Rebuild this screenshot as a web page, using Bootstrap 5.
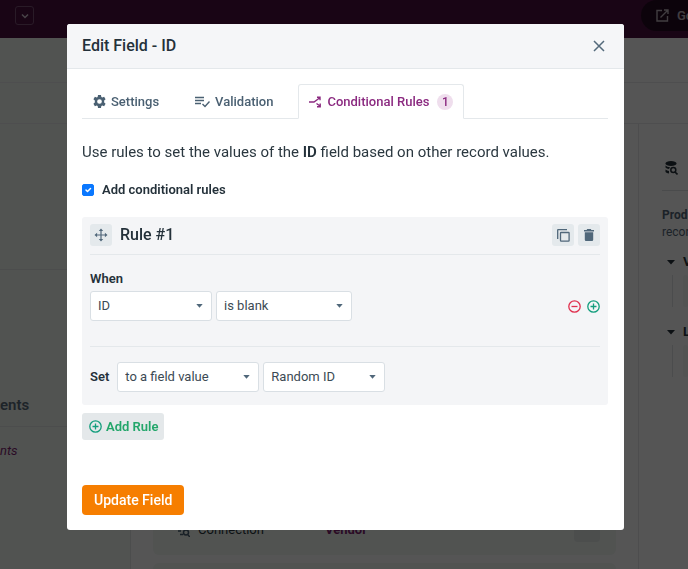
<!DOCTYPE html>
<html lang="en">
<head>
<meta charset="utf-8">
<meta name="viewport" content="width=device-width, initial-scale=1">
<title>Edit Field - ID</title>
<link href="https://cdn.jsdelivr.net/npm/bootstrap@5.3.0/dist/css/bootstrap.min.css" rel="stylesheet">
<style>
  body { font-family: Roboto, "Noto Sans", sans-serif; font-size: 13px; line-height: 20px; color: #2b3840; overflow: hidden; }
  svg { display: block; flex: none; }
  /* page behind the dialog */
  .backdrop-page { height: 100vh; overflow: hidden; }
  .top-bar { flex: none; height: 38px; background: #4b0f40; }
  .app-menu { width: 19px; height: 19px; margin: 6px 0 0 15px; padding: 0; border: 1px solid #7c5376; border-radius: 3px; background: none; color: #d9c9d6; }
  .live-link { width: 47px; height: 31px; padding-left: 15px; border-radius: 16px 0 0 16px; background: #260a22; color: #c4b8c2; font-size: 13px; font-weight: 600; white-space: nowrap; overflow: hidden; }
  .tool-row { flex: none; height: 45px; border-bottom: 1px solid #e9ebed; background: #fff; }
  .tool-row.second { height: 41px; }
  .side-tint { width: 130px; background: #f2f8f4; }
  .side-left { width: 131px; background: #f2f8f4; border-right: 1px solid #e3e6e8; }
  .side-blank { height: 146px; border-bottom: 1px solid #e3e6e8; }
  .side-head { height: 157px; padding-bottom: 11px; border-bottom: 1px solid #e3e6e8; font-size: 15px; font-weight: 600; color: #5b6c7b; }
  .side-item { padding-top: 14px; font-style: italic; color: #7f1f70; text-decoration: none; }
  .canvas-col { padding: 0 22px; }
  .field-card { height: 62px; padding: 12px 16px 0 24px; border-radius: 6px; background: #f2f8f4; }
  .canvas-blank { height: 369px; }
  .field-name { width: 119px; }
  .field-link { color: #7f1f70; }
  .field-action { width: 26px; height: 24px; border-radius: 4px; background: #e4eae6; }
  .side-right { width: 50px; border-left: 1px solid #e6e8ea; padding-left: 23px; white-space: nowrap; overflow: hidden; }
  .side-right .icon-row { height: 67px; padding: 37px 0 0 3px; border-bottom: 1px solid #dfe2e5; }
  .side-note { margin: 16px 0 11px; line-height: 17px; font-size: 12px; color: #56687a; }
  .side-group { height: 70px; margin-left: 5px; }
  .side-group > div:first-child { gap: 8px; height: 20px; }
  .side-slot { height: 32px; margin: 3px 0 0 5px; border-left: 1px solid #e1e4e6; padding-left: 10px; }
  .side-slot div { height: 32px; background: #f6f8f7; border-radius: 4px; }
  .modal-backdrop { --bs-backdrop-opacity: .667; }
  /* dialog */
  .modal-dialog { max-width: none; margin: 24px 64px 24px 67px; }
  .modal-content { border: 0; border-radius: 3px; }
  .modal-header { height: 45px; padding: 0 16px 0 15px; background: #f5f6f8; border-bottom: 1px solid #e4e8eb; border-radius: 3px 3px 0 0; }
  .modal-title { font-size: 16px; line-height: 20px; font-weight: 500; color: #24313a; }
  .close-btn { width: 18px; height: 18px; padding: 0; border: 0; background: none; color: #546a7b; }
  .modal-body { padding: 15px 16px 15px 15px; }
  .nav-tabs { --bs-nav-tabs-border-color: #e4e8eb; }
  .nav-tabs .nav-link { display: flex; align-items: center; height: 35px; padding: 0 10px; gap: 5px; color: #4a6072; font-size: 13px; font-weight: 500; border-radius: 3px 3px 0 0; }
  .nav-tabs .nav-link.active { color: #8b2a80; border-color: #e4e8eb #e4e8eb #fff; }
  .nav-tabs li + li { margin-left: 14px; }
  .count-pill { width: 16px; height: 16px; margin-left: 3px; border-radius: 8px; background: #efdeed; line-height: 16px; font-size: 12px; text-align: center; }
  .intro { margin: 22px 0 17px; font-size: 15px; line-height: 22px; }
  .intro b { font-weight: 600; color: #24313a; }
  .strong-label { font-weight: 600; color: #24313a; }
  .form-check-input { width: 12px; height: 12px; margin: 0; }
  .form-check-input[type=checkbox] { border-radius: 2px; }
  .form-check-input:checked { background-color: #0a78ff; border-color: #0a78ff; }
  .rule-box { margin-top: 17px; padding: 7px 8px 13px; border-radius: 3px; background: #f4f5f7; }
  .rule-head { padding-bottom: 8px; border-bottom: 1px solid #e4e8eb; }
  .rule-title { font-size: 16px; line-height: 20px; font-weight: 500; color: #24313a; }
  .tool-btn { display: flex; align-items: center; justify-content: center; width: 22px; height: 22px; padding: 0; border: 0; border-radius: 3px; background: #e4e9ec; color: #50677a; }
  .when-block { padding: 14px 0 25px; border-bottom: 1px solid #e4e8eb; }
  .when-row { padding-top: 2px; }
  .set-row { padding-top: 15px; }
  .form-select { height: 30px; padding: 0 24px 0 7px; border: 1px solid #d9dfe4; border-radius: 3px; font-size: 13px; line-height: 20px; color: #3c4a54; background-color: #fff; background-size: 7px 4px; background-position: right 8px center;
    background-image: url("data:image/svg+xml,%3csvg xmlns='http://www.w3.org/2000/svg' viewBox='0 0 7 4'%3e%3cpath fill='%2350677a' d='M.3 0h6.4L3.5 3.8z'/%3e%3c/svg%3e"); }
  .w-field { width: 122px; }
  .w-test { width: 136px; }
  .w-source { width: 142px; }
  .gap-tight { gap: 4px; }
  .gap-pair { gap: 6px; }
  .round-btn { padding: 0; border: 0; background: none; }
  .add-rule { display: flex; align-items: center; gap: 4px; height: 27px; margin-top: 8px; padding: 0 6px 0 7px; border: 0; border-radius: 3px; background: #e4e8ea; color: #22a66a; font-size: 13px; font-weight: 600; }
  .update-btn { height: 30px; margin-top: 45px; padding: 0 12px; border: 0; border-radius: 4px; background: #f67e00; color: #fff; font-size: 14px; font-weight: 500; }
</style>
<script src="https://cdn.jsdelivr.net/npm/bootstrap@5.3.0/dist/js/bootstrap.bundle.min.js"></script>
</head>
<body>
<div class="backdrop-page d-flex flex-column">
  <header class="top-bar d-flex justify-content-between">
    <button class="app-menu d-flex align-items-center justify-content-center" aria-label="Switch app"><svg width="10" height="10" viewBox="0 0 10 10" fill="none" stroke="currentColor" stroke-width="1.5"><path d="M2 3.5l3 3 3-3"/></svg></button>
    <a href="#" class="live-link d-flex align-items-center gap-2 text-decoration-none"><svg width="13" height="13" viewBox="0 0 13 13" fill="none" stroke="currentColor" stroke-width="1.4"><path d="M6 1.500H1v10.500h10.500V7M8 1h4v4M12 1L4.500 8.500"/></svg>Go</a>
  </header>
  <div class="tool-row"><div class="side-tint h-100"></div></div>
  <div class="tool-row second"><div class="side-tint h-100"></div></div>
  <div class="d-flex flex-grow-1">
    <aside class="side-left flex-shrink-0">
      <div class="side-blank"></div>
      <div class="side-head d-flex align-items-end">ents</div>
      <a href="#" class="side-item d-block">nts</a>
    </aside>
    <main class="canvas-col flex-grow-1">
      <div class="canvas-blank"></div>
      <div class="field-card d-flex align-items-center gap-2">
        <svg width="13" height="13" viewBox="0 0 13 13" fill="none" stroke="#4a6072" stroke-width="1.500"><path d="M1 3h5M1 7h3M3 10.500h3M11 11l2 2"/><circle cx="9" cy="8.500" r="2.500"/></svg>
        <span class="field-name">Connection</span><b class="field-link">Vendor</b>
        <span class="field-action ms-auto"></span>
      </div>
      <div class="field-card mt-2"></div>
    </main>
    <aside class="side-right flex-shrink-0">
      <div class="icon-row"><svg width="13" height="14" viewBox="0 0 13 14" fill="#26323a"><ellipse cx="6" cy="2.500" rx="5.500" ry="2.500"/><path d="M.5 4.500Q2 6 5 6.200L4 8Q1.500 7.500.5 6.500zM.5 8.500Q2 9.700 4 10v2.500Q1.500 12 .5 11z"/><circle cx="8.300" cy="9" r="2.500" fill="none" stroke="#26323a" stroke-width="1.500"/><path d="M10 11l2.500 2.500" stroke="#26323a" stroke-width="1.600"/></svg></div>
      <p class="side-note"><b>Prod</b><br>recor</p>
      <div class="side-group"><div class="d-flex align-items-center"><svg width="8" height="5" viewBox="0 0 8 5"><path d="M0 0h8L4 4.500z" fill="#26323a"/></svg><b>V</b></div><div class="side-slot"><div></div></div></div>
      <div class="side-group"><div class="d-flex align-items-center"><svg width="8" height="5" viewBox="0 0 8 5"><path d="M0 0h8L4 4.500z" fill="#26323a"/></svg><b>L</b></div><div class="side-slot"><div></div></div></div>
    </aside>
  </div>
</div>
<div class="modal-backdrop show"></div>
<div class="modal d-block" role="dialog" aria-labelledby="dialog-title">
  <div class="modal-dialog">
    <div class="modal-content">
      <div class="modal-header d-flex justify-content-between align-items-center">
        <h1 class="modal-title" id="dialog-title">Edit Field - ID</h1>
        <button class="close-btn d-flex align-items-center justify-content-center" aria-label="Close"><svg width="12" height="12" viewBox="0 0 12 12" stroke="currentColor" stroke-width="1.500"><path d="M1 1l10 10M11 1L1 11"/></svg></button>
      </div>
      <div class="modal-body">
        <ul class="nav nav-tabs flex-nowrap">
          <li class="nav-item"><a class="nav-link" href="#"><svg width="13" height="13" viewBox="1 1 22 22" fill="currentColor"><path fill-rule="evenodd" d="M9.500 1h5l.6 3.200 1.700 1 3-1.100 2.500 4.300-2.400 2.100v3l2.400 2.100-2.500 4.300-3-1.100-1.700 1-.6 3.200h-5l-.6-3.200-1.700-1-3 1.100-2.500-4.300 2.400-2.100v-3L1.700 8.400l2.500-4.300 3 1.100 1.700-1zM12 8a4 4 0 100 8 4 4 0 000-8z"/></svg>Settings</a></li>
          <li class="nav-item"><a class="nav-link" href="#"><svg width="15" height="12" viewBox="0 0 15 12" fill="none" stroke="currentColor" stroke-width="1.400"><path d="M0 1.500h9M0 4.500h9M0 7.500h6M7.500 8l2.500 2.500 4.500-5"/></svg>Validation</a></li>
          <li class="nav-item"><a class="nav-link active" href="#" aria-current="page"><svg width="13" height="12" viewBox="0 0 13 12" fill="none" stroke="currentColor" stroke-width="1.400"><path d="M0 6h5l5.500-4M7.500 7.500l3.500 2.500M8 1.200h3v3M11.200 7.500v3.300H8"/></svg>Conditional Rules<span class="count-pill">1</span></a></li>
        </ul>
        <p class="intro">Use rules to set the values of the <b>ID</b> field based on other record values.</p>
        <div class="d-flex align-items-center">
          <input class="form-check-input" type="checkbox" id="add-rules" checked>
          <label class="strong-label ps-2" for="add-rules">Add conditional rules</label>
        </div>
        <section class="rule-box">
          <div class="rule-head d-flex align-items-center">
            <button class="tool-btn" aria-label="Move rule"><svg width="14" height="14" viewBox="0 0 14 14" fill="currentColor"><path d="M7 .5l2.200 2.600H7.600v3.300h3.300V4.800L13.500 7l-2.600 2.200V7.600H7.600v3.300h1.600L7 13.500l-2.200-2.600h1.600V7.600H3.100v1.600L.5 7l2.600-2.200v1.600h3.300V3.100H4.800z"/></svg></button>
            <h2 class="rule-title mb-0 ms-2">Rule #1</h2>
            <button class="tool-btn ms-auto" aria-label="Copy rule"><svg width="13" height="13" viewBox="0 0 13 13" fill="none" stroke="currentColor" stroke-width="1.300"><path d="M.7 10V1.200Q.7.700 1.200.700H10"/><rect x="3.500" y="3.500" width="8.600" height="8.600" rx=".6"/></svg></button>
            <button class="tool-btn ms-1" aria-label="Delete rule"><svg width="10" height="12" viewBox="0 0 10 12" fill="currentColor"><path d="M3.200 0h3.600l.6 1H10v1.500H0V1h2.600zM.8 3.300h8.400v7.500Q9.200 12 8 12H2Q.8 12 .8 10.800z"/></svg></button>
          </div>
          <div class="when-block">
            <label class="strong-label d-block" for="when-field">When</label>
            <div class="when-row d-flex align-items-center gap-tight">
              <select class="form-select w-field" id="when-field"><option>ID</option></select>
              <select class="form-select w-test" aria-label="Condition"><option>is blank</option></select>
              <div class="d-flex gap-pair ms-auto">
                <button class="round-btn" aria-label="Remove condition"><svg width="13" height="13" viewBox="0 0 13 13" fill="none" stroke="#e0314f" stroke-width="1.300"><circle cx="6.500" cy="6.500" r="5.700"/><path d="M3.500 6.500h6"/></svg></button>
                <button class="round-btn" aria-label="Add condition"><svg width="13" height="13" viewBox="0 0 13 13" fill="none" stroke="#139e7d" stroke-width="1.300"><circle cx="6.500" cy="6.500" r="5.700"/><path d="M3.500 6.500h6M6.500 3.500v6"/></svg></button>
              </div>
            </div>
          </div>
          <div class="set-row d-flex align-items-center gap-tight">
            <label class="strong-label me-1" for="set-source">Set</label>
            <select class="form-select w-source" id="set-source"><option>to a field value</option></select>
            <select class="form-select w-field" aria-label="Value field"><option>Random ID</option></select>
          </div>
        </section>
        <button class="add-rule"><svg width="13" height="13" viewBox="0 0 13 13" fill="none" stroke="#139e7d" stroke-width="1.300"><circle cx="6.500" cy="6.500" r="5.700"/><path d="M3.500 6.500h6M6.500 3.500v6"/></svg>Add Rule</button>
        <button class="update-btn">Update Field</button>
      </div>
    </div>
  </div>
</div>
</body>
</html>
